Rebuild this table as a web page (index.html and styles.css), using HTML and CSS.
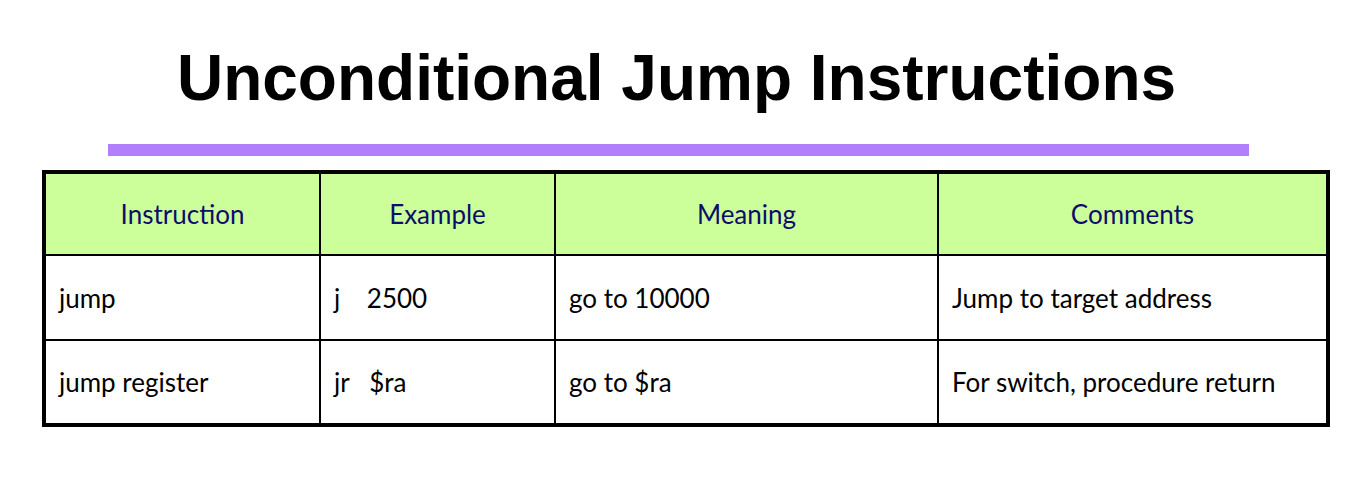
FILE: index.html
```html
<!DOCTYPE html>
<html lang="en">
<head>
<meta charset="utf-8">
<title>Unconditional Jump Instructions</title>
<link rel="stylesheet" href="styles.css">
</head>
<body>
<main class="slide">
  <h1 class="title">Unconditional Jump Instructions</h1>
  <div class="rule"></div>
  <table class="grid">
    <thead>
      <tr>
        <th class="c1">Instruction</th>
        <th class="c2">Example</th>
        <th class="c3">Meaning</th>
        <th class="c4">Comments</th>
      </tr>
    </thead>
    <tbody>
      <tr class="r1">
        <td>jump</td>
        <td class="pre">j    2500</td>
        <td>go to 10000</td>
        <td>Jump to target address</td>
      </tr>
      <tr class="r2">
        <td>jump register</td>
        <td class="pre">jr   $ra</td>
        <td>go to $ra</td>
        <td>For switch, procedure return</td>
      </tr>
    </tbody>
  </table>
</main>
</body>
</html>
```

FILE: styles.css
```css
html, body {
  margin: 0;
  padding: 0;
  background: #ffffff;
}

.slide {
  display: flex;
  flex-direction: column;
  align-items: flex-start;
  padding: 46px 0 0 42px;
}

.title {
  margin: 0 0 0 66px;
  width: 1137px;
  text-align: center;
  font-family: "Liberation Sans", Arial, sans-serif;
  font-weight: bold;
  font-size: 64px;
  line-height: 64px;
  color: #000;
}

.rule {
  margin: 34px 0 0 66px;
  width: 1141px;
  height: 12px;
  background: #b07ff9;
}

.grid {
  margin-top: 14px;
  border-collapse: separate;
  border-spacing: 0;
  border: 4px solid #000;
  font-family: Lato, "Open Sans", sans-serif;
  font-size: 26px;
  color: #000;
}

.grid th,
.grid td {
  padding: 0 13px;
  border-right: 2px solid #000;
  border-bottom: 2px solid #000;
  vertical-align: middle;
  box-sizing: content-box;
}

.grid th:last-child,
.grid td:last-child {
  border-right: none;
}

.grid tbody tr:last-child td {
  border-bottom: none;
}

.grid th {
  height: 80px;
  background: #ccff99;
  color: #0d0d6b;
  font-weight: normal;
  text-align: center;
}

.grid td {
  text-align: left;
}

.r1 td { height: 83px; }
.r2 td { height: 82px; }

.c1 { width: 247px; }
.c2 { width: 207px; }
.c3 { width: 355px; }
.c4 { width: 361px; }

.pre { white-space: pre; }
```
